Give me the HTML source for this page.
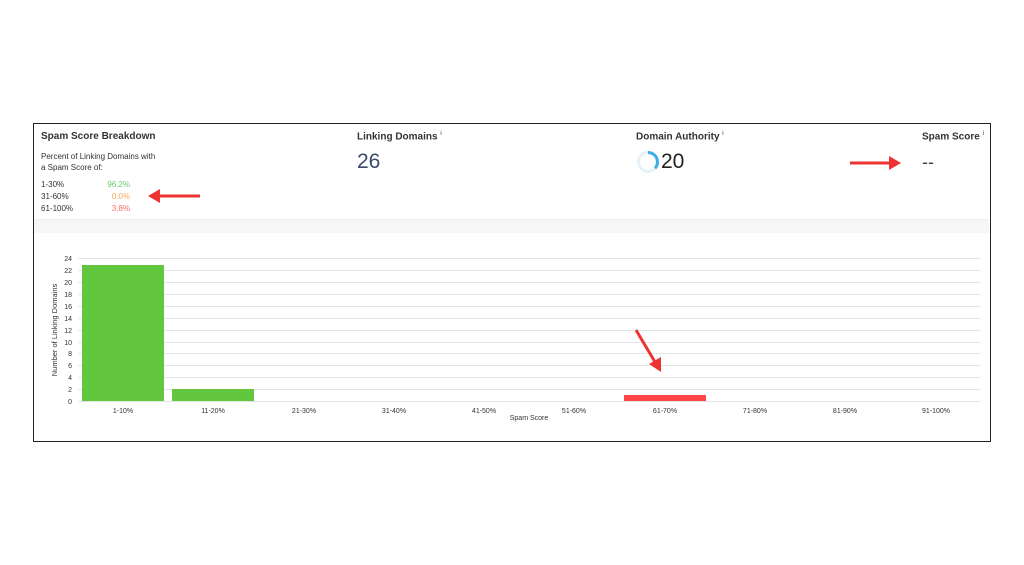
<!DOCTYPE html>
<html><head><meta charset="utf-8"><style>
body{margin:0;width:1024px;height:565px;background:#fff;font-family:"Liberation Sans",sans-serif;position:relative;overflow:hidden;color:#333}
.box{position:absolute;left:33px;top:123px;width:956px;height:317px;border:1px solid #222}
.t{position:absolute;font-size:10px;color:#333}
.h{font-size:10px;font-weight:bold;color:#333}
sup{font-size:6px;font-weight:normal}
</style></head><body>
<div class="box"></div>
<div style="position:absolute;left:34px;top:219px;width:955px;height:13px;background:#f6f6f6;border-top:1px solid #eee"></div>
<div class="t h" style="left:41px;top:131px">Spam Score Breakdown</div>
<div class="t" style="left:41px;top:151px;font-size:8px;line-height:11px">Percent of Linking Domains with<br>a Spam Score of:</div>
<div class="t" style="left:41px;top:179px;font-size:8px;line-height:12px">1-30%<br>31-60%<br>61-100%</div>
<div class="t" style="left:100px;width:30px;text-align:right;top:179px;font-size:8px;line-height:12px"><span style="color:#6c6">96.2%</span><br><span style="color:#f9a65a">0.0%</span><br><span style="color:#f66">3.8%</span></div>
<div class="t h" style="left:357px;top:131px">Linking Domains <sup>i</sup></div>
<div class="t" style="left:357px;top:150px;font-size:21px;color:#3a4a6b">26</div>
<div class="t h" style="left:636px;top:131px">Domain Authority <sup>i</sup></div>
<svg style="position:absolute;left:636px;top:150px" width="24" height="24"><circle cx="12" cy="12" r="9.5" fill="none" stroke="#e6f2f7" stroke-width="3"/><path d="M12 2.5 A9.5 9.5 0 0 1 19 18.4" fill="none" stroke="#3daee9" stroke-width="3"/></svg>
<div class="t" style="left:661px;top:150px;font-size:21px;color:#222">20</div>
<div class="t h" style="left:922px;top:131px">Spam Score <sup>i</sup></div>
<div class="t" style="left:922px;top:152px;font-size:18px;color:#444">--</div>
<svg style="position:absolute;left:0;top:0" width="1024" height="565">
<g stroke="#e3e6e6" stroke-width="1">
<line x1="78" x2="980" y1="258.5" y2="258.5"/><line x1="78" x2="980" y1="270.5" y2="270.5"/><line x1="78" x2="980" y1="282.5" y2="282.5"/><line x1="78" x2="980" y1="294.5" y2="294.5"/><line x1="78" x2="980" y1="306.5" y2="306.5"/><line x1="78" x2="980" y1="318.5" y2="318.5"/><line x1="78" x2="980" y1="330.5" y2="330.5"/><line x1="78" x2="980" y1="342.5" y2="342.5"/><line x1="78" x2="980" y1="353.5" y2="353.5"/><line x1="78" x2="980" y1="365.5" y2="365.5"/><line x1="78" x2="980" y1="377.5" y2="377.5"/><line x1="78" x2="980" y1="389.5" y2="389.5"/><line x1="78" x2="980" y1="401.5" y2="401.5"/>
</g>
<g font-size="7" fill="#333" text-anchor="end" font-family="Liberation Sans">
<text x="72" y="261">24</text><text x="72" y="273">22</text><text x="72" y="285">20</text><text x="72" y="297">18</text><text x="72" y="309">16</text><text x="72" y="321">14</text><text x="72" y="333">12</text><text x="72" y="345">10</text><text x="72" y="356">8</text><text x="72" y="368">6</text><text x="72" y="380">4</text><text x="72" y="392">2</text><text x="72" y="404">0</text>
</g>
<text transform="translate(57,330) rotate(-90)" font-size="7.5" fill="#333" text-anchor="middle" font-family="Liberation Sans">Number of Linking Domains</text>
<rect x="82" y="265" width="82" height="136" fill="#62c63f"/>
<rect x="172" y="389" width="82" height="12" fill="#62c63f"/>
<rect x="624" y="395" width="82" height="6" fill="#f44"/>
<g font-size="7" fill="#333" text-anchor="middle" font-family="Liberation Sans">
<text x="123" y="413">1-10%</text><text x="213" y="413">11-20%</text><text x="304" y="413">21-30%</text><text x="394" y="413">31-40%</text><text x="484" y="413">41-50%</text><text x="574" y="413">51-60%</text><text x="665" y="413">61-70%</text><text x="755" y="413">71-80%</text><text x="845" y="413">81-90%</text><text x="936" y="413">91-100%</text>
<text x="529" y="420">Spam Score</text>
</g>
<g fill="#ee3333" stroke="#ee3333">
<line x1="200" y1="196" x2="158" y2="196" stroke-width="3"/><polygon points="148,196 160,189 160,203" stroke="none"/>
<line x1="850" y1="163" x2="890" y2="163" stroke-width="3"/><polygon points="901,163 889,156 889,170" stroke="none"/>
<line x1="636" y1="330" x2="655" y2="362" stroke-width="3"/><polygon points="661,372 649,364 661,357" stroke="none"/>
</g>
</svg>
</body></html>
